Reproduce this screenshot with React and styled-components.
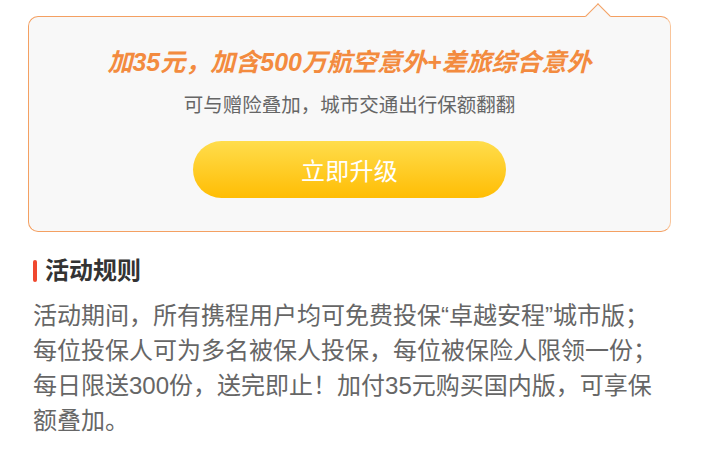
import React from "react";
import styled, { createGlobalStyle } from "styled-components";

const Global = createGlobalStyle`
  html, body { margin: 0; padding: 0; background: #ffffff; }
  body { font-family: "Liberation Sans", "Noto Sans CJK SC", sans-serif; }
`;

const Page = styled.div`
  width: 713px;
  padding-top: 16px;
  box-sizing: border-box;
`;

const Card = styled.section`
  position: relative;
  margin: 0 42px 0 28px;
  height: 216px;
  box-sizing: border-box;
  border: 1px solid #f4a062;
  border-right-color: #f9c59b;
  border-radius: 10px;
  background: #f8f8f8;
  display: flex;
  flex-direction: column;
  align-items: center;
  padding-top: 28px;
`;

const Notch = styled.span`
  position: absolute;
  top: -10px;
  left: 560px;
  width: 17px;
  height: 17px;
  background: #f8f8f8;
  border-top: 1px solid #f4a062;
  border-left: 1px solid #f4a062;
  transform: rotate(45deg);
`;

const Title = styled.h2`
  margin: 0;
  font-size: 25px;
  line-height: 34px;
  font-weight: 700;
  font-style: italic;
  color: #f38b3f;
  white-space: nowrap;
`;

const Subtitle = styled.p`
  margin: 12px 0 0;
  font-size: 19.5px;
  line-height: 28px;
  color: #666666;
  white-space: nowrap;
`;

const UpgradeButton = styled.button`
  margin-top: 22px;
  width: 313px;
  height: 57px;
  border: none;
  border-radius: 29px;
  background: linear-gradient(180deg, #ffdd4c 0%, #ffbd04 100%);
  color: #ffffff;
  font-family: inherit;
  font-size: 24px;
  letter-spacing: 0.3px;
  cursor: pointer;
`;

const Rules = styled.section`
  width: 640px;
  margin: 22px 0 0 33px;
`;

const Heading = styled.h3`
  margin: 0 0 10px;
  display: flex;
  align-items: center;
  gap: 8px;
  font-size: 24px;
  line-height: 34px;
  font-weight: 700;
  color: #333333;
`;

const Bar = styled.span`
  width: 4px;
  height: 22px;
  border-radius: 2px;
  background: #f0482f;
`;

const Line = styled.p`
  margin: 0;
  font-size: 24px;
  line-height: 35px;
  color: #666666;
`;

const rules = [
  "活动期间，所有携程用户均可免费投保“卓越安程”城市版；",
  "每位投保人可为多名被保人投保，每位被保险人限领一份；",
  "每日限送300份，送完即止！加付35元购买国内版，可享保额叠加。",
];

export default function App() {
  return (
    <>
      <Global />
      <Page>
        <Card>
          <Notch />
          <Title>加35元，加含500万航空意外+差旅综合意外</Title>
          <Subtitle>可与赠险叠加，城市交通出行保额翻翻</Subtitle>
          <UpgradeButton>立即升级</UpgradeButton>
        </Card>
        <Rules>
          <Heading>
            <Bar />
            活动规则
          </Heading>
          {rules.map((r) => (
            <Line key={r}>{r}</Line>
          ))}
        </Rules>
      </Page>
    </>
  );
}
